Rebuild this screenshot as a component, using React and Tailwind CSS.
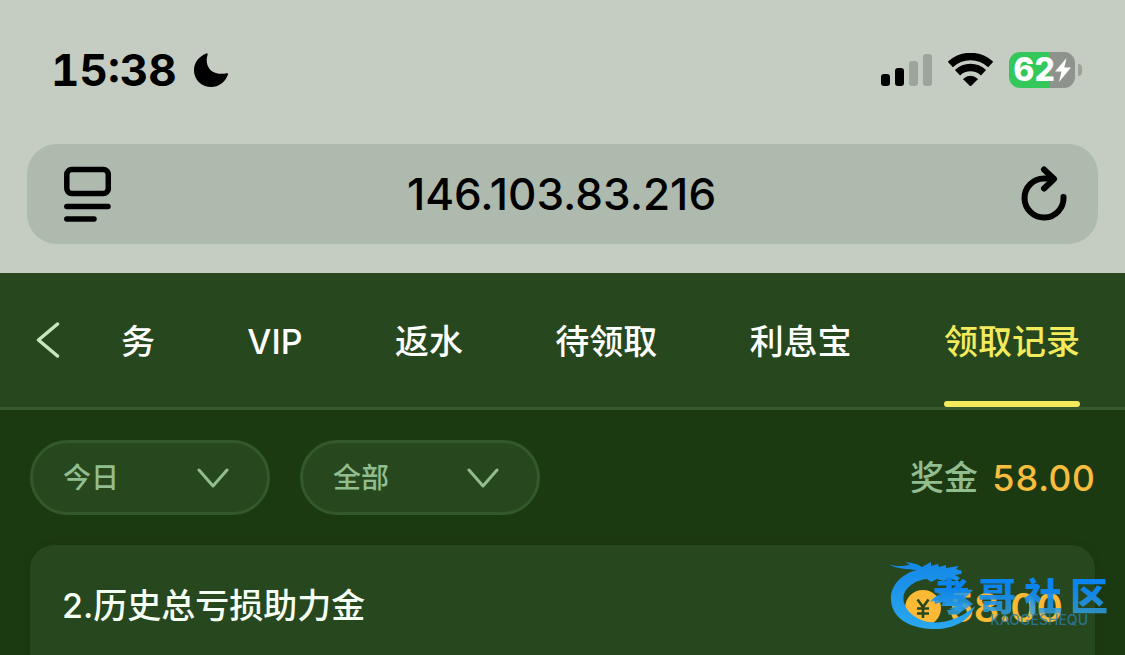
import { useState } from 'react';

const tabs = ['务', 'VIP', '返水', '待领取', '利息宝', '领取记录'];

const records = [{ id: 2, title: '历史总亏损助力金', amount: '58.00' }];

const StatusBar = () => (
  <div className="flex items-center justify-between pl-[51px] pr-[43px] pt-10">
    <div className="flex items-center gap-4">
      <span className="text-[44px] leading-[60px] font-bold tabular-nums">15:38</span>
      <svg className="w-9 h-9" viewBox="0 0 36 36" fill="currentColor" aria-hidden="true">
        <path d="M13.2 1.6C14 .9 15 1.500 14.600 2.700C11.500 12 16.500 22.800 30 21.700C32.500 21.500 34.200 20.800 34.800 21.400C35.300 22 34.700 23.300 34.200 24.300C31.200 31 25.500 35 18.300 35C8.500 35 1 27.800 1 18.300C1 11 5.500 4.700 13.200 1.600Z" />
      </svg>
    </div>

    <div className="flex items-center gap-4">
      <svg className="w-[51px] h-8" viewBox="0 0 51 32" fill="currentColor" aria-hidden="true">
        <rect x="0" y="20" width="9" height="12" rx="3" />
        <rect x="14" y="14" width="9" height="18" rx="3" />
        <rect x="28" y="7" width="9" height="25" rx="3" opacity="0.2" />
        <rect x="42" y="0" width="9" height="32" rx="3" opacity="0.2" />
      </svg>
      <svg className="w-[45px] h-[34px]" viewBox="0 0 45 34" fill="none" stroke="currentColor" aria-hidden="true">
        <path d="M2.300 11.500A29.500 29.500 0 0 1 42.700 11.500" strokeWidth="7.500" />
        <path d="M9.500 19.700A19 19 0 0 1 35.500 19.700" strokeWidth="7.500" />
        <path d="M22.500 33L15.500 26Q22.500 20.500 29.500 26Z" fill="currentColor" strokeWidth="1" strokeLinejoin="round" />
      </svg>
      <div className="flex items-center gap-[3px]">
        <div className="flex items-center justify-center w-[66px] h-9 rounded-[11px] bg-linear-to-r from-[#34c759] from-62% to-[#8e938d] to-62% text-white">
          <span className="text-[32px] leading-9 font-extrabold">62</span>
          <svg className="w-4 h-6" viewBox="0 0 16 24" fill="currentColor" aria-hidden="true">
            <path d="M11.500 0L0 13.500H6.500L4 24L16 9.500H9.300Z" />
          </svg>
        </div>
        <div className="w-1 h-3 rounded-r-full bg-[#9ca39a]" />
      </div>
    </div>
  </div>
);

const AddressBar = () => (
  <div className="flex items-center mx-[27px] mt-11 mb-[29px] h-[100px] rounded-[30px] bg-[#aebaad] pl-9 pr-[30px]">
    <button type="button" aria-label="页面菜单">
      <svg className="w-12 h-14" viewBox="0 0 48 56" fill="none" stroke="currentColor" strokeWidth="5.500" strokeLinecap="round" aria-hidden="true">
        <rect x="3.800" y="3.500" width="41.500" height="24" rx="5" />
        <path d="M3.800 40.500H45M3.800 53H31" />
      </svg>
    </button>
    <input
      className="flex-1 min-w-0 bg-transparent pr-2 text-center text-[44px] leading-[60px] font-medium outline-none"
      aria-label="地址"
      defaultValue="146.103.83.216"
    />
    <button type="button" aria-label="刷新">
      <svg className="w-12 h-14" viewBox="0 0 48 56" fill="none" stroke="currentColor" strokeWidth="6" strokeLinecap="round" strokeLinejoin="round" aria-hidden="true">
        <path d="M43.500 31A19.500 19.500 0 1 1 24 12.500H33" />
        <path d="M24 3.500L34 13L24 22.500" />
      </svg>
    </button>
  </div>
);

const TabBar = ({ active, onChange }) => (
  <nav className="flex items-stretch h-[137px] border-b-[3px] border-[#345a2d] bg-[#27481f] pl-9 pr-[45px]">
    <button type="button" className="text-[#c5e8c2]" aria-label="返回">
      <svg className="w-6 h-9" viewBox="0 0 24 36" fill="none" stroke="currentColor" strokeWidth="3.500" strokeLinecap="round" strokeLinejoin="round" aria-hidden="true">
        <path d="M21.500 2L2.500 18L21.500 34" />
      </svg>
    </button>
    <div className="flex flex-1 justify-between ml-[61px]">
      {tabs.map((tab) => (
        <a
          key={tab}
          href="#"
          onClick={(e) => {
            e.preventDefault();
            onChange(tab);
          }}
          className={`flex flex-col justify-end text-[34px] leading-[50px] font-medium whitespace-nowrap ${
            tab === active ? 'text-[#f3ea5c]' : 'text-white'
          }`}
        >
          {tab}
          <span className={`mt-[34px] h-1.5 rounded-full ${tab === active ? 'bg-[#f3ea5c]' : ''}`} />
        </a>
      ))}
    </div>
  </nav>
);

const FilterSelect = ({ label, options }) => (
  <label className="relative block w-60 text-[#92bd8f]">
    <select
      aria-label={label}
      className="w-full h-[75px] appearance-none rounded-full border-[3px] border-[#33582c] bg-[#27481f] pl-[30px] text-[28px] font-medium outline-none"
    >
      {options.map((option) => (
        <option key={option}>{option}</option>
      ))}
    </select>
    <svg className="absolute right-[41px] top-7 w-8 h-5 pointer-events-none" viewBox="0 0 32 20" fill="none" stroke="currentColor" strokeWidth="3" strokeLinecap="round" strokeLinejoin="round" aria-hidden="true">
      <path d="M2 2L16 18L30 2" />
    </svg>
  </label>
);

const Coin = () => (
  <svg className="w-9 h-9" viewBox="0 0 36 36" aria-hidden="true">
    <circle cx="18" cy="18" r="18" fill="#fbb936" />
    <path d="M12.500 9.500L18 17L23.500 9.500M18 17V28M12 18.500H24M12 23.500H24" fill="none" stroke="#27481f" strokeWidth="2.600" />
  </svg>
);

const RecordCard = ({ record }) => (
  <article className="flex items-start justify-between mx-[30px] mt-[30px] h-60 rounded-3xl bg-[#27481f] px-8 pt-9 shadow-[0_0_8px_rgba(0,0,0,0.12)]">
    <h3 className="text-[34px] leading-[50px] font-medium text-[#f6fff4]">
      {record.id}.{record.title}
    </h3>
    <div className="flex items-center gap-2 mt-0.5 text-[#fbb936]">
      <Coin />
      <span className="text-[40px] leading-[50px] font-semibold">{record.amount}</span>
    </div>
  </article>
);

const Watermark = () => (
  <div className="absolute right-[17px] top-[560px] flex items-start pointer-events-none">
    <svg className="w-24 h-[72px] -mr-[53px]" viewBox="0 0 96 72" aria-hidden="true">
      <defs>
        <linearGradient id="dragon" x1="0" y1="0" x2="0" y2="72" gradientUnits="userSpaceOnUse">
          <stop offset="0" stopColor="#1487e8" />
          <stop offset="1" stopColor="#2ba9ee" />
        </linearGradient>
      </defs>
      {/* body and head */}
      <path
        fill="url(#dragon)"
        d="M0 4C6 7 13 6 21 5L16 2C24 3 28 4 33 7L42 2L42 6L49 4L50 7L57 5L57 8L70 6L67 9L73 11L72 14L66 15L71 18L68 21L60 18L55 21L48 19L42 22L38 19C27 20 18 26 15 34C12 44 20 56 35 61C50 65 69 61 86 46C80 62 62 70 43 69C20 68 3 58 2 40C1 26 12 14 28 10C19 9 6 9 0 4Z"
      />
      {/* claw sweeping over the tail */}
      <path
        fill="url(#dragon)"
        opacity="0.85"
        d="M41 42C45 37 48 35 52 34L46 33L60 28L84 30L76 38L84 44L72 52L60 49L66 46L55 46L58 42L49 43L52 39Z"
      />
    </svg>
    <div className="mt-4">
      <div className="flex gap-2 bg-linear-to-b from-[#0c84f0] from-30% to-[#35a5e0]/80 bg-clip-text text-[38px] leading-10 font-black text-transparent">
        <span>考</span>
        <span>哥</span>
        <span>社</span>
        <span>区</span>
      </div>
      <p className="-mt-1 pr-5 text-right text-[14px] leading-4 font-medium text-[#2a80ac]/80">KAOGESHEQU</p>
    </div>
  </div>
);

const App = () => {
  const [active, setActive] = useState('领取记录');

  return (
    <div className="relative h-screen overflow-hidden bg-[#1c3a12] font-[Inter,'Noto_Sans_CJK_SC',sans-serif]">
      <header className="flow-root bg-[#c5cdc2] text-black">
        <StatusBar />
        <AddressBar />
      </header>

      <TabBar active={active} onChange={setActive} />

      <main>
        <div className="flex items-center px-[30px] pt-[30px] gap-[30px]">
          <FilterSelect label="日期" options={['今日', '昨日', '近7日']} />
          <FilterSelect label="类型" options={['全部', '活动', '任务']} />
          <div className="flex items-center gap-[14px] ml-auto font-medium">
            <span className="text-[34px] leading-[50px] text-[#92bd8f]">奖金</span>
            <span className="text-[36px] leading-[50px] text-[#f8bd3d] tabular-nums">58.00</span>
          </div>
        </div>
        {records.map((record) => (
          <RecordCard key={record.id} record={record} />
        ))}
      </main>

      <Watermark />
    </div>
  );
};

export default App;
